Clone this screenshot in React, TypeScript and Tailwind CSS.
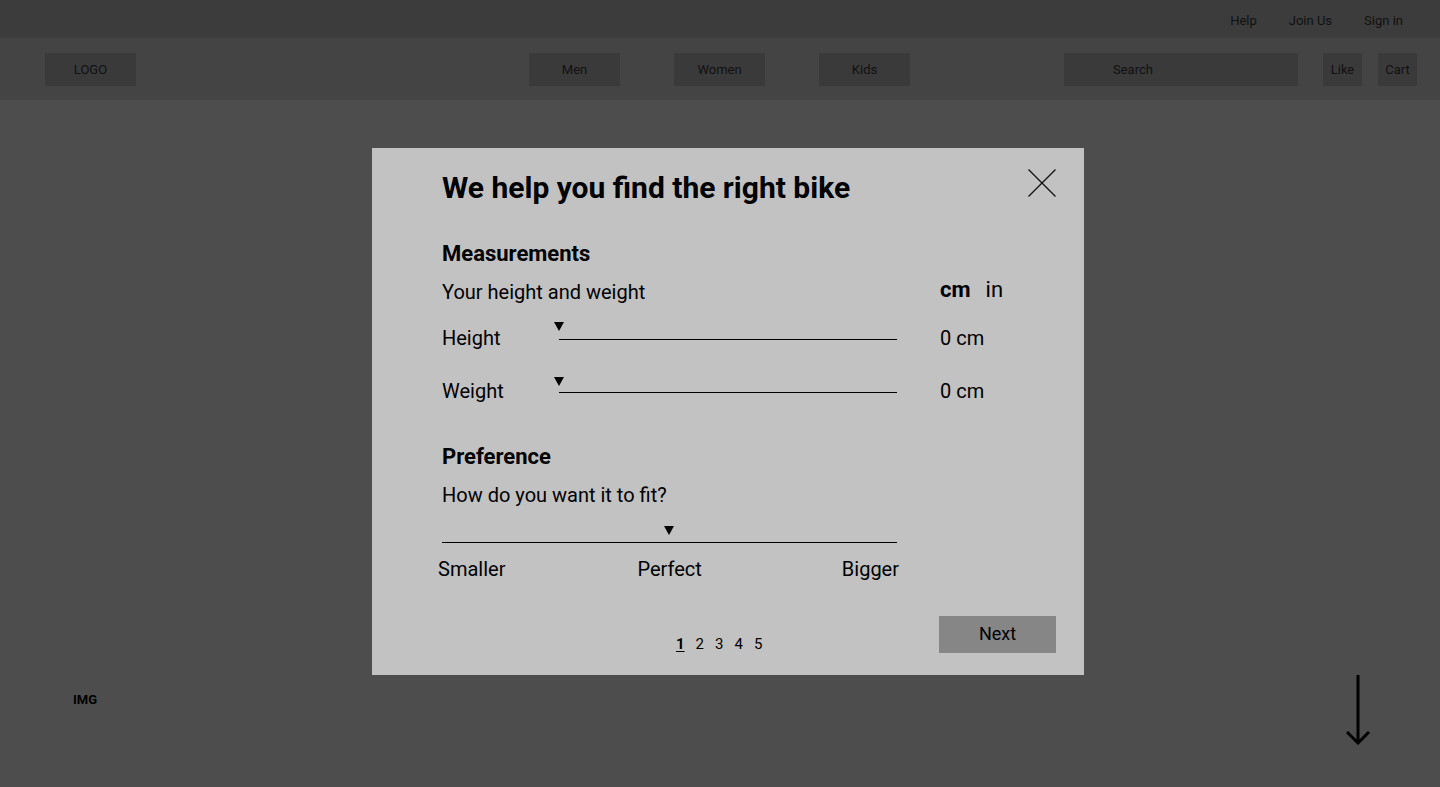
import React from 'react';

const navItems = ['Men', 'Women', 'Kids'];

function Slider({ pos, triTop, lineTop, h }: { pos: string; triTop: string; lineTop: string; h: string }) {
  return (
    <div className={`relative ${h}`}>
      <div className={`absolute left-0 right-0 h-px bg-black ${lineTop}`} />
      <div
        className={`absolute w-0 h-0 -translate-x-1/2 border-l-[5px] border-r-[5px] border-t-[9px] border-l-transparent border-r-transparent border-t-black ${triTop}`}
        style={{ left: pos }}
      />
    </div>
  );
}

function Modal() {
  return (
    <div className="absolute left-[372px] top-[148px] w-[712px] h-[527px] bg-[#c2c2c2] text-black pl-[70px] pr-[28px] pt-[23px]">
      <button className="absolute top-[21px] right-[28px] w-[28px] h-[28px]">
        <svg width="28" height="28" viewBox="0 0 28 28" stroke="#111" strokeWidth="1.3">
          <line x1="0.5" y1="0.5" x2="27.5" y2="27.5" />
          <line x1="27.5" y1="0.5" x2="0.5" y2="27.5" />
        </svg>
      </button>

      <h1 className="text-[30px] leading-[34px] font-bold">We help you find the right bike</h1>

      <h2 className="mt-[37px] text-[22px] leading-[24px] font-bold">Measurements</h2>

      <div className="grid grid-cols-[117px_338px_43px_1fr] text-[20px] leading-[24px]">
        <div className="col-span-3 mt-[14px]">Your height and weight</div>
        <div className="mt-[12px] flex gap-[15px] text-[22px]">
          <span className="font-bold">cm</span>
          <span>in</span>
        </div>

        <div className="mt-[22px]">Height</div>
        <div className="mt-[22px]">
          <Slider pos="0px" triTop="top-[-4px]" lineTop="top-[13px]" h="h-[24px]" />
        </div>
        <div className="mt-[22px]" />
        <div className="mt-[22px]">0 cm</div>

        <div className="mt-[29px]">Weight</div>
        <div className="mt-[29px]">
          <Slider pos="0px" triTop="top-[-2px]" lineTop="top-[13px]" h="h-[24px]" />
        </div>
        <div className="mt-[29px]" />
        <div className="mt-[29px]">0 cm</div>
      </div>

      <h2 className="mt-[42px] text-[22px] leading-[24px] font-bold">Preference</h2>
      <p className="mt-[14px] text-[20px] leading-[24px]">How do you want it to fit?</p>

      <div className="w-[455px]">
        <Slider pos="227px" triTop="top-[19px]" lineTop="top-[35px]" h="h-[36px]" />
      </div>

      <div className="-ml-[4px] w-[461px] mt-[14px] flex text-[20px] leading-[24px]">
        <span>Smaller</span>
        <span className="ml-[132px]">Perfect</span>
        <span className="ml-auto">Bigger</span>
      </div>

      <div className="mt-[35px] flex items-end">
        <div className="ml-[234px] flex gap-[11px] text-[15px] leading-[18px]">
          <span className="font-bold underline underline-offset-2">1</span>
          <span>2</span>
          <span>3</span>
          <span>4</span>
          <span>5</span>
        </div>
        <button className="ml-auto w-[117px] h-[37px] bg-[#868686] text-[18px] leading-[22px] pb-[2px]">Next</button>
      </div>
    </div>
  );
}

export default function App() {
  return (
    <div className="relative w-[1440px] h-[787px] overflow-hidden bg-[#4d4d4d] text-[#111] font-['Roboto',sans-serif]">
      <div className="h-[38px] bg-[#3c3c3c] flex items-center justify-end gap-[32px] pr-[37px] pt-[4px] text-[13px]">
        <span>Help</span>
        <span>Join Us</span>
        <span>Sign in</span>
      </div>

      <div className="h-[62px] bg-[#444444] flex items-center pl-[45px] text-[13px]">
        <div className="w-[91px] h-[33px] bg-[#3a3a3a] flex items-center justify-center pt-[1px]">LOGO</div>
        <div className="ml-[393px] flex gap-[54px]">
          {navItems.map(n => (
            <div key={n} className="w-[91px] h-[33px] bg-[#3a3a3a] flex items-center justify-center pt-[1px]">{n}</div>
          ))}
        </div>
        <div className="ml-[154px] w-[234px] h-[33px] bg-[#3a3a3a] flex items-center pl-[49px] pt-[1px]">Search</div>
        <div className="ml-[25px] w-[39px] h-[33px] bg-[#3a3a3a] flex items-center justify-center pt-[1px]">Like</div>
        <div className="ml-[16px] w-[39px] h-[33px] bg-[#3a3a3a] flex items-center justify-center pt-[1px]">Cart</div>
      </div>

      <div className="flex items-start justify-between pt-[575px]">
        <div className="ml-[73px] mt-[15px] text-[13px] font-bold text-black">IMG</div>
        <svg className="mr-[70px]" width="24" height="70" viewBox="0 0 24 70" fill="none" stroke="#000" strokeWidth="3">
          <line x1="12" y1="0" x2="12" y2="67" />
          <polyline points="1,57 12,68 23,57" />
        </svg>
      </div>

      <Modal />
    </div>
  );
}
